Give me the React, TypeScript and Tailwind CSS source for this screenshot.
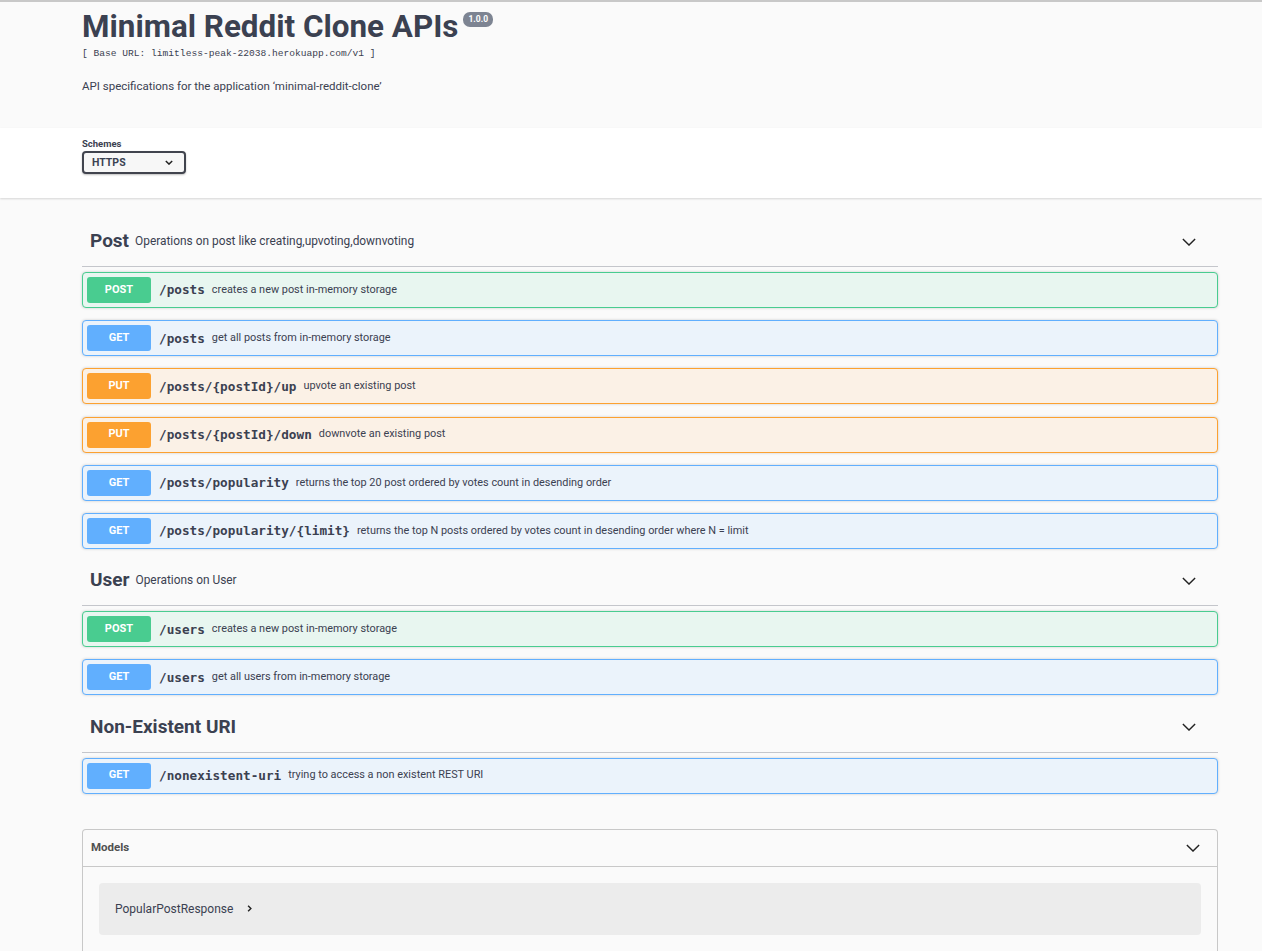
import React from 'react';

type Method = 'POST' | 'GET' | 'PUT';

const methodStyles: Record<Method, { block: string; badge: string }> = {
  POST: { block: 'border-[#49cc90] bg-[#e8f6f0]', badge: 'bg-[#49cc90]' },
  GET: { block: 'border-[#61affe] bg-[#ebf3fb]', badge: 'bg-[#61affe]' },
  PUT: { block: 'border-[#fca130] bg-[#fbf1e6]', badge: 'bg-[#fca130]' },
};

const tags = [
  {
    name: 'Post',
    description: 'Operations on post like creating,upvoting,downvoting',
    ops: [
      { method: 'POST' as Method, path: '/posts', summary: 'creates a new post in-memory storage' },
      { method: 'GET' as Method, path: '/posts', summary: 'get all posts from in-memory storage' },
      { method: 'PUT' as Method, path: '/posts/{postId}/up', summary: 'upvote an existing post' },
      { method: 'PUT' as Method, path: '/posts/{postId}/down', summary: 'downvote an existing post' },
      { method: 'GET' as Method, path: '/posts/popularity', summary: 'returns the top 20 post ordered by votes count in desending order' },
      { method: 'GET' as Method, path: '/posts/popularity/{limit}', summary: 'returns the top N posts ordered by votes count in desending order where N = limit' },
    ],
  },
  {
    name: 'User',
    description: 'Operations on User',
    ops: [
      { method: 'POST' as Method, path: '/users', summary: 'creates a new post in-memory storage' },
      { method: 'GET' as Method, path: '/users', summary: 'get all users from in-memory storage' },
    ],
  },
  {
    name: 'Non-Existent URI',
    description: '',
    ops: [
      { method: 'GET' as Method, path: '/nonexistent-uri', summary: 'trying to access a non existent REST URI' },
    ],
  },
];

function Chevron({ className }: { className?: string }) {
  return (
    <svg viewBox="0 0 16 9" className={className} fill="none" stroke="#222" strokeWidth="1.6">
      <path d="M1 1l7 7 7-7" />
    </svg>
  );
}

function Operation({ method, path, summary }: { method: Method; path: string; summary: string }) {
  const s = methodStyles[method];
  return (
    <div className={`mb-[12.2px] flex h-[36px] items-center rounded-[4px] border px-[4px] shadow-[0_0_3px_rgba(0,0,0,0.19)] ${s.block}`}>
      <span
        className={`flex h-[26px] w-[64px] items-center justify-center rounded-[3px] text-[11px] font-bold text-white ${s.badge}`}
      >
        {method}
      </span>
      <span
        className="ml-[8px] text-[12.7px] font-semibold text-[#3b4151]"
        style={{ fontFamily: "'DejaVu Sans Mono', monospace" }}
      >
        {path}
      </span>
      <span className="ml-[7px] text-[10.9px] text-[#3b4151]">{summary}</span>
    </div>
  );
}

export default function App() {
  return (
    <div
      className="min-h-[951px] border-t-2 border-[#c8c8c8] bg-[#fafafa] text-[#3b4151]"
      style={{ fontFamily: 'Roboto, sans-serif' }}
    >
      {/* Info */}
      <div className="h-[126px] pl-[82px]">
        <div className="flex items-start pt-[4px]">
          <h1 className="text-[31.4px] leading-[42px] font-bold text-[#3b4151]">Minimal Reddit Clone APIs</h1>
          <span className="ml-[5px] mt-[6px] rounded-[7px] bg-[#7d8492] px-[5px] py-[1px] text-[8.5px] font-bold text-white">
            1.0.0
          </span>
        </div>
        <div
          className="text-[9.6px] leading-[12px] text-[#3b4151]"
          style={{ fontFamily: "'Liberation Mono', monospace" }}
        >
          [ Base URL: limitless-peak-22038.herokuapp.com/v1 ]
        </div>
        <p className="mt-[18px] text-[11.5px] text-[#3b4151]">
          API specifications for the application ‘minimal-reddit-clone’
        </p>
      </div>

      {/* Schemes */}
      <div className="h-[70px] bg-white pl-[82px] pt-[9px] shadow-[0_1px_2px_rgba(0,0,0,0.15)]">
        <div className="text-[9.5px] font-bold leading-[14px]">Schemes</div>
        <div className="flex h-[23px] w-[104px] items-center justify-between rounded-[4px] border-2 border-[#41444e] bg-[#f7f7f7] pl-[8px] pr-[11px] shadow-[0_1px_2px_rgba(0,0,0,0.25)]">
          <span className="text-[10.5px] font-bold">HTTPS</span>
          <svg viewBox="0 0 10 6" className="h-[5px] w-[8px]" fill="none" stroke="#222" strokeWidth="1.8">
            <path d="M1 1l4 4 4-4" />
          </svg>
        </div>
      </div>

      {/* Operations */}
      <div className="pl-[82px] pr-[44px] pt-[24px]">
        {tags.map((tag) => (
          <div key={tag.name}>
            <div className="mb-[5px] flex h-[45px] items-center border-b border-[#c4c6cb] pb-[5px] pl-[8px] pr-[22px]">
              <span className="text-[19px] font-bold">{tag.name}</span>
              {tag.description && <span className="ml-[6px] text-[11.9px]">{tag.description}</span>}
              <Chevron className="ml-auto h-[8px] w-[14px]" />
            </div>
            {tag.ops.map((op, i) => (
              <Operation key={i} {...op} />
            ))}
          </div>
        ))}

        {/* Models */}
        <div className="mt-[35px] rounded-t-[4px] border border-b-0 border-[#c8c8c8] pb-[20px]">
          <div className="flex h-[37px] items-center border-b border-[#c8c8c8] pl-[8px] pr-[17px]">
            <span className="text-[11.5px] font-bold text-[#505050]">Models</span>
            <Chevron className="ml-auto h-[8px] w-[14px]" />
          </div>
          <div className="mx-[16px] mt-[16px] flex h-[52px] items-center rounded-[4px] bg-[#ececec] pl-[16px]">
            <span className="text-[12px] text-[#3b4151]">PopularPostResponse</span>
            <svg viewBox="0 0 6 10" className="ml-[14px] h-[7px] w-[5px]" fill="none" stroke="#222" strokeWidth="2">
              <path d="M1 1l4 4-4 4" />
            </svg>
          </div>
        </div>
      </div>
    </div>
  );
}
